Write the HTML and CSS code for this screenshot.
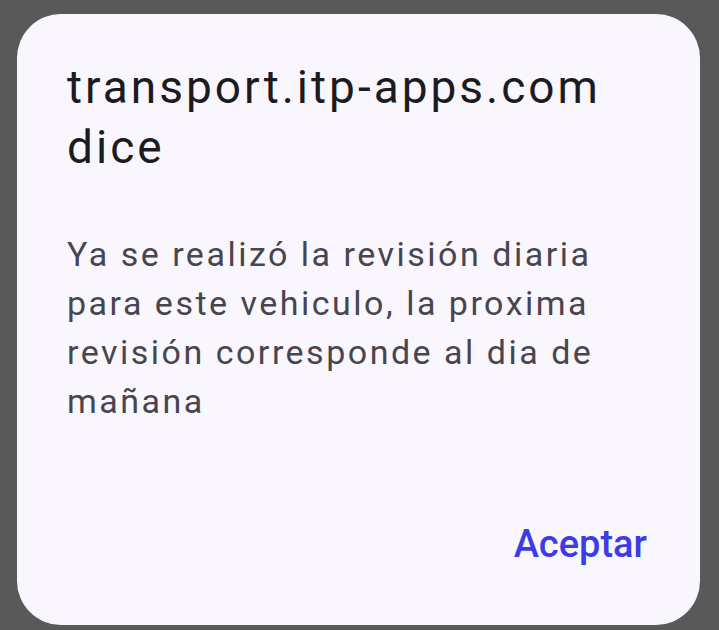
FILE: index.html
```html
<!DOCTYPE html>
<html>
<head>
  <title>transport.itp-apps.com dice</title>
  <link rel="stylesheet" href="styles.css">
</head>
<body>
  <div class="dialog">
    <h1 class="dialog-title">transport.itp-apps.com dice</h1>
    <p class="dialog-message">Ya se realizó la revisión diaria<br>para este vehiculo, la proxima<br>revisión corresponde al dia de<br>mañana</p>
    <div class="dialog-actions">
      <button class="dialog-button">Aceptar</button>
    </div>
  </div>
</body>
</html>
```

FILE: styles.css
```css
body {
  margin: 0;
  background-color: #595959;
  font-family: Roboto, "Noto Sans", sans-serif;
  height: 630px;
  padding: 14px 19px 0 17px;
  box-sizing: border-box;
}
.dialog {
  background: #f9f7fd;
  border-radius: 44px;
  width: 683px;
  height: 611px;
  box-sizing: border-box;
  padding: 43px 53px 0 50px;
  display: flex;
  flex-direction: column;
}
.dialog-title {
  margin: 0;
  font-size: 46px;
  font-weight: 400;
  line-height: 60px;
  letter-spacing: 3px;
  color: #1c1b1f;
  width: 560px;
}
.dialog-message {
  margin: 53px 0 0 0;
  font-size: 34px;
  line-height: 49px;
  letter-spacing: 2.5px;
  color: #49454f;
}
.dialog-actions {
  margin-top: auto;
  margin-bottom: 59px;
  display: flex;
  justify-content: flex-end;
}
.dialog-button {
  background: none;
  border: none;
  padding: 0;
  font-family: inherit;
  font-size: 38px;
  line-height: 44px;
  font-weight: 500;
  color: #3c3ce6;
  cursor: pointer;
}
```
